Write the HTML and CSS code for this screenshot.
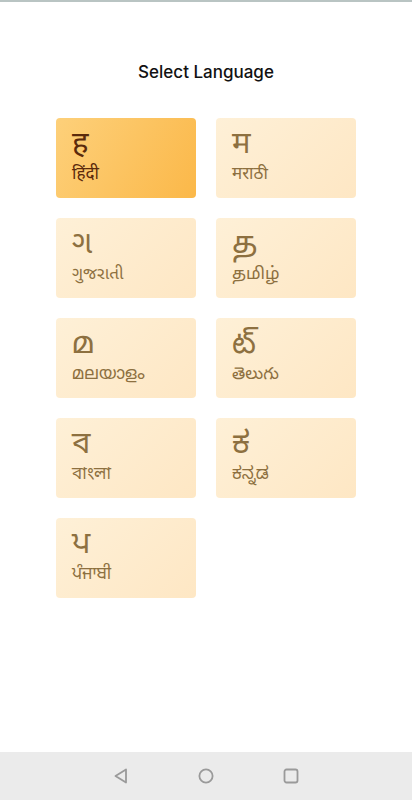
FILE: index.html
```html
<!DOCTYPE html>
<html lang="en">
<head>
<meta charset="utf-8">
<meta name="viewport" content="width=device-width, initial-scale=1">
<title>Select Language</title>
<link rel="stylesheet" href="styles.css">
</head>
<body>
<div class="screen">
  <div class="topline"></div>
  <main class="content">
    <h1 class="title">Select Language</h1>
    <div class="grid">
      <div class="card selected"><span class="glyph">ह</span><span class="name">हिंदी</span></div>
      <div class="card"><span class="glyph">म</span><span class="name">मराठी</span></div>
      <div class="card"><span class="glyph">ગ</span><span class="name">ગુજરાતી</span></div>
      <div class="card"><span class="glyph">த</span><span class="name">தமிழ்</span></div>
      <div class="card"><span class="glyph">മ</span><span class="name">മലയാളം</span></div>
      <div class="card"><span class="glyph">ట్</span><span class="name">తెలుగు</span></div>
      <div class="card"><span class="glyph">ব</span><span class="name">বাংলা</span></div>
      <div class="card"><span class="glyph">ಕ</span><span class="name">ಕನ್ನಡ</span></div>
      <div class="card"><span class="glyph">ਪ</span><span class="name">ਪੰਜਾਬੀ</span></div>
    </div>
  </main>
  <nav class="navbar">
    <svg class="navicon" width="18" height="18" viewBox="0 0 18 18"><path d="M14 2.5 L3.5 9 L14 15.5 Z" fill="none" stroke="#9a9a9a" stroke-width="1.8" stroke-linejoin="round"/></svg>
    <svg class="navicon" width="18" height="18" viewBox="0 0 18 18"><circle cx="9" cy="9" r="6.6" fill="none" stroke="#9a9a9a" stroke-width="1.8"/></svg>
    <svg class="navicon" width="18" height="18" viewBox="0 0 18 18"><rect x="2.5" y="2.5" width="13" height="13" rx="2" fill="none" stroke="#9a9a9a" stroke-width="1.8"/></svg>
  </nav>
</div>
</body>
</html>
```
FILE: styles.css
```css
* { box-sizing: border-box; }
html, body { margin: 0; padding: 0; background: #ffffff; }
body {
  font-family: "Noto Sans", "Noto Sans Devanagari", "Noto Sans Gujarati", "Noto Sans Tamil", "Noto Sans Malayalam", "Noto Sans Telugu", "Noto Sans Bengali", "Noto Sans Kannada", "Noto Sans Gurmukhi", sans-serif;
}
.screen {
  width: 412px;
  height: 800px;
  display: flex;
  flex-direction: column;
}
.topline {
  height: 2px;
  background: #b9c4c3;
}
.content {
  flex: 1;
  display: flex;
  flex-direction: column;
  align-items: center;
}
.title {
  margin: 58px 0 0;
  font-family: Inter, "Noto Sans", sans-serif;
  font-size: 17px;
  font-weight: 500;
  line-height: 24px;
  color: #111111;
}
.grid {
  margin-top: 34px;
  display: grid;
  grid-template-columns: 140px 140px;
  gap: 20px;
}
.card {
  height: 80px;
  border-radius: 4px;
  background: linear-gradient(135deg, #fef0d7 0%, #fee7c4 100%);
  padding: 4px 16px 0;
  display: flex;
  flex-direction: column;
  color: #8d7040;
}
.card.selected {
  background: linear-gradient(120deg, #fdd07a 0%, #fbb849 100%);
  color: #5b2a0c;
}
.glyph {
  font-size: 31px;
  line-height: 38px;
  height: 38px;
}
.name {
  margin-top: 2px;
  font-size: 17px;
  line-height: 22px;
}
.navbar {
  height: 48px;
  background: #ebebeb;
  display: flex;
  justify-content: center;
  align-items: center;
  gap: 67px;
}
.navicon { display: block; }
```
